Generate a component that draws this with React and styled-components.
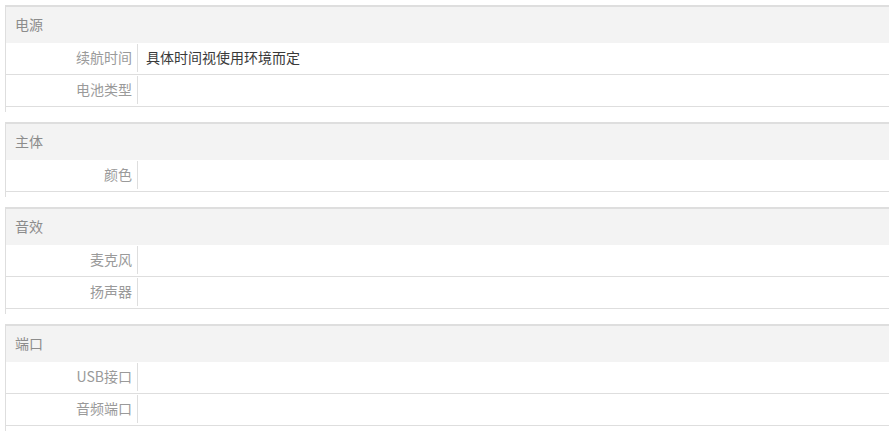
import React from "react";
import styled, { createGlobalStyle } from "styled-components";

const specs = [
  {
    title: "电源",
    items: [
      { label: "续航时间", value: "具体时间视使用环境而定" },
      { label: "电池类型", value: "" },
    ],
  },
  { title: "主体", items: [{ label: "颜色", value: "" }] },
  {
    title: "音效",
    items: [
      { label: "麦克风", value: "" },
      { label: "扬声器", value: "" },
    ],
  },
  {
    title: "端口",
    items: [
      { label: "USB接口", value: "" },
      { label: "音频端口", value: "" },
    ],
  },
];

const App = () => {
  return (
    <>
      <GlobalStyle />
      <Wrap>
        {specs.map((group) => (
          <Section key={group.title}>
            <SectionTitle>{group.title}</SectionTitle>
            {group.items.map((item) => (
              <Row key={item.label}>
                <Label>{item.label}</Label>
                <Value>{item.value}</Value>
              </Row>
            ))}
          </Section>
        ))}
      </Wrap>
    </>
  );
};

export default App;

const GlobalStyle = createGlobalStyle`
  body {
    margin: 0;
    background: #fff;
    font-family: "Microsoft YaHei", "Noto Sans CJK SC", "Noto Sans", sans-serif;
  }
`;

const Wrap = styled.div`
  display: flex;
  flex-direction: column;
  gap: 10px;
  padding: 5px 3px 0 5px;
`;

const Section = styled.div`
  display: flex;
  flex-direction: column;
  border-top: 2px solid #dedede;
  border-left: 1px solid #dedede;
  padding-bottom: 5px;
`;

const SectionTitle = styled.div`
  display: flex;
  align-items: center;
  height: 36px;
  padding: 0 0 2px 9px;
  box-sizing: border-box;
  background: #f3f3f3;
  color: #8c8c8c;
  font-size: 14px;
`;

const Row = styled.div`
  display: flex;
  align-items: flex-start;
  height: 31px;
  border-bottom: 1px solid #dedede;
`;

const Label = styled.div`
  box-sizing: border-box;
  flex-shrink: 0;
  width: 132px;
  height: 28px;
  margin-top: 1px;
  padding-right: 5px;
  border-right: 1px solid #dedede;
  line-height: 27px;
  text-align: right;
  color: #9a9a9a;
  font-size: 14px;
`;

const Value = styled.div`
  padding-left: 8px;
  height: 28px;
  margin-top: 1px;
  line-height: 27px;
  color: #3a3a3a;
  font-size: 14px;
`;
